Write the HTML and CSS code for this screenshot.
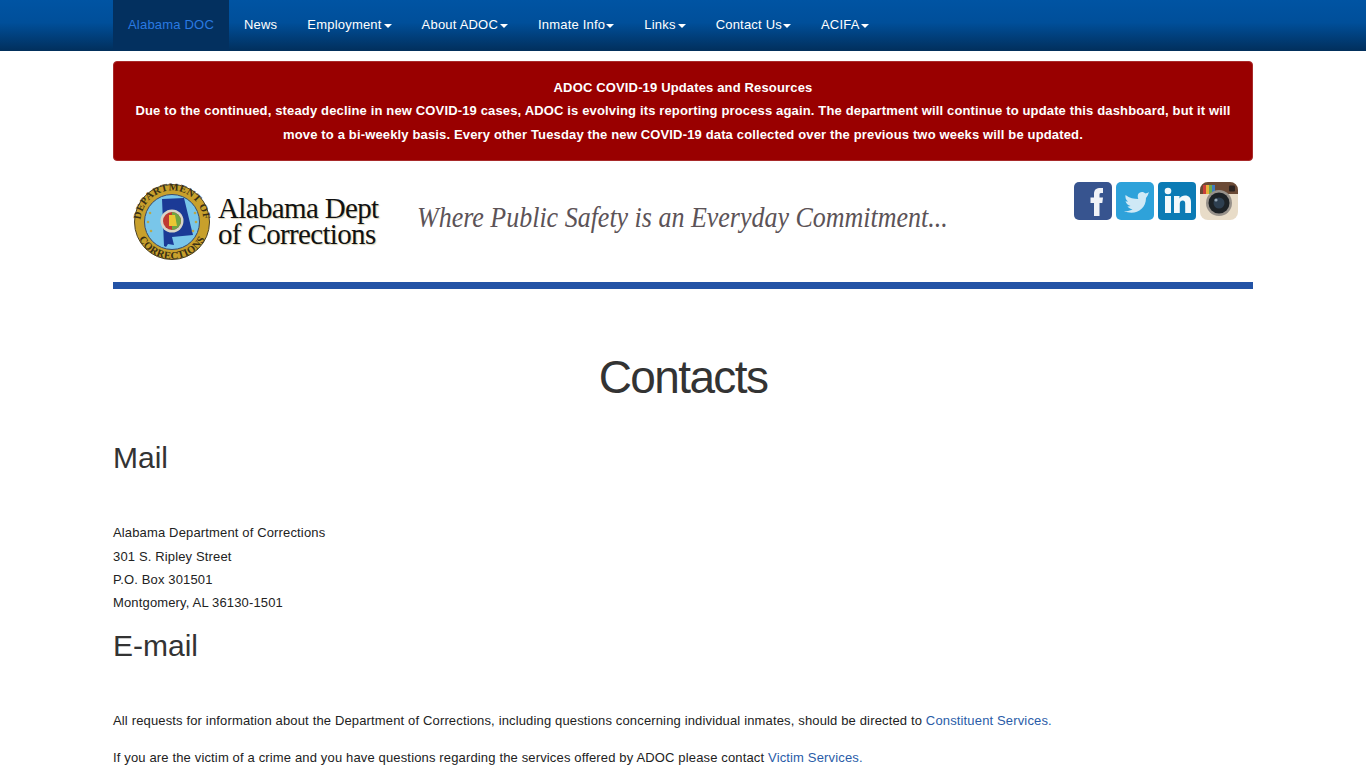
FILE: index.html
```html
<!DOCTYPE html>
<html lang="en">
<head>
    <meta charset="UTF-8">
    <title>Contacts - Alabama Department of Corrections</title>
    <link rel="stylesheet" href="styles.css">
</head>
<body>
    <nav class="navbar">
        <ul class="nav">
            <li class="active"><a href="#">Alabama DOC</a></li>
            <li><a href="#">News</a></li>
            <li><a href="#">Employment<span class="caret wide"></span></a></li>
            <li><a href="#">About ADOC<span class="caret wide"></span></a></li>
            <li><a href="#">Inmate Info<span class="caret"></span></a></li>
            <li><a href="#">Links<span class="caret wide"></span></a></li>
            <li><a href="#">Contact Us<span class="caret"></span></a></li>
            <li><a href="#">ACIFA<span class="caret"></span></a></li>
        </ul>
    </nav>

    <div class="container">
        <div class="alert">
            ADOC COVID-19 Updates and Resources<br>
            Due to the continued, steady decline in new COVID-19 cases, ADOC is evolving its reporting process again. The department will continue to update this dashboard, but it will move to a bi-weekly basis. Every other Tuesday the new COVID-19 data collected over the previous two weeks will be updated.
        </div>

        <header class="banner">
            <svg class="seal" width="78" height="78" viewBox="0 0 78 78">
                <defs>
                    <path id="sealTop" d="M7.500 39 A31.500 31.500 0 0 1 70.500 39"/>
                    <path id="sealBottom" d="M2 39 A37 37 0 0 0 76 39"/>
                </defs>
                <circle cx="39" cy="39" r="37.500" fill="#c8a02c" stroke="#4a4023"/>
                <circle cx="39" cy="39" r="27.500" fill="#79c6ea" stroke="#3a4a6a"/>
                <text class="seal-text"><textPath href="#sealTop" startOffset="50%" text-anchor="middle">DEPARTMENT OF</textPath></text>
                <text class="seal-text"><textPath href="#sealBottom" startOffset="50%" text-anchor="middle">CORRECTIONS</textPath></text>
                <path d="M29 16 L51 15 L58 44 L60 52 L39 54 L41 62 L35 61 L33 64 L31 63 Z" fill="#1b3a96"/>
                <g fill="#b9a84a">
                    <circle cx="17" cy="30" r="1.300"/>
                    <circle cx="15" cy="39" r="1.300"/>
                    <circle cx="18" cy="48" r="1.300"/>
                    <circle cx="62" cy="30" r="1.300"/>
                    <circle cx="63" cy="39" r="1.300"/>
                    <circle cx="60" cy="48" r="1.300"/>
                </g>
                <circle cx="39" cy="38" r="11.500" fill="#d9d5c8"/>
                <circle cx="39" cy="38" r="9" fill="#bf3a32"/>
                <path d="M39 29 A9 9 0 0 1 39 47 Z" fill="#6fa544"/>
                <path d="M36 32 L42 32 L44 43 L36 43 Z" fill="#ecc733"/>
            </svg>
            <div class="logo-name">Alabama Dept<br>of Corrections</div>
            <div class="motto">Where Public Safety is an Everyday Commitment...</div>
            <div class="social">
                <svg width="38" height="38" viewBox="0 0 38 38">
                    <rect width="38" height="38" rx="5" fill="#37548f"/>
                    <path d="M20 34 V21 H16.500 V15.500 H20 V12 C20 7.500 22.500 6 26.500 6 H29 V11 H27 C25.600 11 25.500 11.800 25.500 13 V15.500 H29 L28.300 21 H25.500 V34 Z" fill="#f0f2f7"/>
                </svg>
                <svg width="38" height="38" viewBox="0 0 38 38">
                    <rect width="38" height="38" rx="5" fill="#2ea2da"/>
                    <path d="M33 10 C31.500 11 30.500 11.300 29.500 11.500 C27.500 9 23 9.500 22 12.500 C21.500 14 21.800 15.500 22.300 17 C18 17 13.500 16 9.500 13 C9 15.500 10 18 12 19.500 C11 19.500 10 19.500 9.500 19 C10 21.500 12 23.500 14.500 24 C13.500 24.500 12.500 24.500 11.500 24.300 C12.500 26 14.500 27 16.500 27.300 C14.500 28.800 11.500 29.500 8 29 C18 33.500 30 28.500 30 16 C31.200 14.500 32.200 12.500 33 10 Z" fill="#cfe9f6"/>
                </svg>
                <svg width="38" height="38" viewBox="0 0 38 38">
                    <rect width="38" height="38" rx="4" fill="#0b7bb5"/>
                    <rect x="7" y="14" width="6" height="17" fill="#f2f8fb"/>
                    <circle cx="10" cy="9" r="3.300" fill="#f2f8fb"/>
                    <path d="M16 14 H21.500 V16.500 C23 14.500 24.800 13.600 27 13.600 C31 13.600 33 16 33 20.500 V31 H27.200 V21.500 C27.200 19.500 26.300 18.500 24.800 18.500 C23 18.500 21.800 19.700 21.800 21.800 V31 H16 Z" fill="#f2f8fb"/>
                </svg>
                <svg width="38" height="38" viewBox="0 0 38 38">
                    <rect width="38" height="38" rx="8" fill="#e8dcc8"/>
                    <path d="M0 8 A8 8 0 0 1 8 0 H30 A8 8 0 0 1 38 8 V12 H27 A13 13 0 0 0 11 12 H0 Z" fill="#6b4a36"/>
                    <rect x="3" y="3" width="3" height="9" fill="#c8403a"/>
                    <rect x="6" y="3" width="3" height="9" fill="#e8b13a"/>
                    <rect x="9" y="3" width="3" height="9" fill="#6fa84a"/>
                    <rect x="12" y="3" width="3" height="7" fill="#3f7cc0"/>
                    <circle cx="19" cy="21" r="13" fill="#97918a"/>
                    <circle cx="19" cy="21" r="10.500" fill="#1d2226"/>
                    <circle cx="19" cy="21" r="5.500" fill="#2e3f50"/>
                    <circle cx="16" cy="18" r="1.600" fill="#93a5b4"/>
                    <rect x="29" y="3.500" width="6" height="6" rx="1" fill="#2c2320"/>
                </svg>
            </div>
        </header>

        <h1>Contacts</h1>

        <h2>Mail</h2>
        <p class="address">
            Alabama Department of Corrections<br>
            301 S. Ripley Street<br>
            P.O. Box 301501<br>
            Montgomery, AL 36130-1501
        </p>

        <h2>E-mail</h2>
        <p>All requests for information about the Department of Corrections, including questions concerning individual inmates, should be directed to <a href="#">Constituent Services.</a></p>
        <p>If you are the victim of a crime and you have questions regarding the services offered by ADOC please contact <a href="#">Victim Services.</a></p>
    </div>
</body>
</html>
```

FILE: styles.css
```css
html, body {
    height: 768px;
    overflow: hidden;
}
body {
    margin: 0;
    font-family: "Liberation Sans", Arial, sans-serif;
    font-size: 13px;
    letter-spacing: .15px;
    line-height: 20px;
    color: #333;
    background: #fff;
}
a {
    color: #2a5ca8;
    text-decoration: none;
}
.navbar {
    height: 50px;
    border-bottom: 1px solid #02305c;
    background: linear-gradient(to bottom, #0054a3 0%, #004f9a 45%, #01305e 100%);
}
.nav {
    display: flex;
    width: 1140px;
    margin: 0 auto;
    padding: 0;
    list-style: none;
    letter-spacing: .2px;
}
.nav a {
    display: block;
    padding: 15px;
    color: #fff;
}
.nav .active a {
    color: #2a7ae2;
    background: #03305f;
}
.caret {
    display: inline-block;
    margin-left: 1px;
    vertical-align: middle;
    border-top: 4px solid #fff;
    border-left: 4px solid transparent;
    border-right: 4px solid transparent;
}
.caret.wide {
    margin-left: 2px;
}
.container {
    width: 1140px;
    margin: 0 auto;
}
.alert {
    box-sizing: border-box;
    height: 100px;
    margin-top: 10px;
    padding: 13.600px 15px;
    border: 1px solid #a82a2a;
    border-radius: 4px;
    background: #990000;
    color: #fff;
    font-weight: bold;
    line-height: 23.500px;
    text-align: center;
}
.banner {
    display: flex;
    align-items: flex-start;
    height: 121px;
    border-bottom: 7px solid #2353a6;
}
.seal {
    margin: 22px 0 0 20px;
    overflow: visible;
}
.seal-text {
    font-family: "Liberation Serif", serif;
    font-size: 10.500px;
    font-weight: bold;
    letter-spacing: .3px;
    fill: #3a2f14;
}
.logo-name {
    margin: 34px 0 0 7px;
    width: 199px;
    font-family: "Liberation Serif", serif;
    font-size: 29px;
    letter-spacing: -.65px;
    line-height: 26px;
    color: #111;
    text-shadow: 1px 1px 1px #d8d2b8;
}
.motto {
    margin: 36px 0 0 0;
    width: 532px;
    font-family: "Liberation Serif", serif;
    font-style: italic;
    font-size: 30px;
    letter-spacing: 0;
    line-height: 40px;
    white-space: nowrap;
    color: #5c5357;
    transform: scaleX(.866);
    transform-origin: left;
}
.social {
    display: flex;
    gap: 4px;
    margin: 21px 15px 0 auto;
}
h1 {
    margin: 58px 0 0;
    font-size: 46px;
    font-weight: normal;
    line-height: 60px;
    letter-spacing: -1.600px;
    text-align: center;
}
h2 {
    margin: 34px 0 0;
    font-size: 30px;
    font-weight: normal;
    letter-spacing: 0;
    line-height: 33px;
}
p {
    margin: 0 0 17px;
    color: #222;
}
h2 + p {
    margin-top: 49px;
}
h2 + .address {
    margin-top: 47.300px;
}
.address {
    margin-bottom: 0;
    line-height: 23.300px;
}
.address + h2 {
    margin-top: 15px;
}
```
